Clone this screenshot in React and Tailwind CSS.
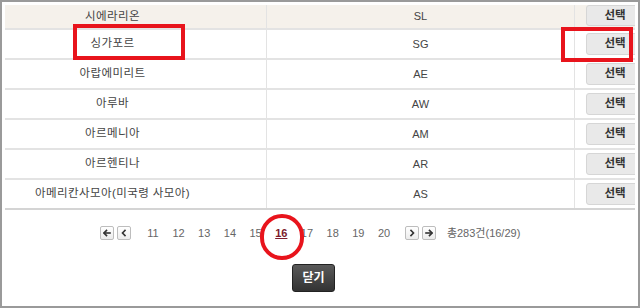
import { useState } from "react";

const rows = [
  { name: "시에라리온", code: "SL" },
  { name: "싱가포르", code: "SG" },
  { name: "아랍에미리트", code: "AE" },
  { name: "아루바", code: "AW" },
  { name: "아르메니아", code: "AM" },
  { name: "아르헨티나", code: "AR" },
  { name: "아메리칸사모아(미국령 사모아)", code: "AS" },
];

const pages = [11, 12, 13, 14, 15, 16, 17, 18, 19, 20];

const font = { fontFamily: '"Liberation Sans", "Noto Sans CJK KR", sans-serif' };

function PageBox({ children }) {
  return (
    <span className="flex h-[14px] w-[14px] items-center justify-center rounded-[2px] border border-[#bdbdbd] bg-gradient-to-b from-white to-[#ececec] text-[#333]">
      {children}
    </span>
  );
}

// 작은 화살표 아이콘
function Arrow({ dir, bar }) {
  const flip = dir === "right" ? "scale(-1,1) translate(-8,0)" : undefined;
  return (
    <svg width="8" height="8" viewBox="0 0 8 8">
      <g transform={flip} fill="none" stroke="#333" strokeWidth="1.6" strokeLinecap="square">
        {bar ? (
          <>
            <path d="M3.5 1.5 L1 4 L3.5 6.5" />
            <path d="M1.5 4 H7" />
          </>
        ) : (
          <path d="M5 1.5 L2.5 4 L5 6.5" />
        )}
      </g>
    </svg>
  );
}

export default function App() {
  const [current] = useState(16);

  return (
    <div
      className="relative h-[308px] w-[640px] overflow-hidden border-2 border-[#9a9a9a] bg-white text-[#444]"
      style={font}
    >
      {/* 국가 목록 */}
      <div className="ml-[3px] mt-[3px] w-[630px] overflow-hidden">
        {rows.map((r, i) => (
          <div
            key={r.code}
            className={
              "flex border-b-2 " +
              (i === 0 ? "h-[25px] bg-[#f5f1eb] " : "h-[30px] ") +
              (i === rows.length - 1 ? "border-[#d4d4d4]" : "border-[#e3e3e3]")
            }
          >
            <div
              className={
                "flex w-[262px] justify-center border-r border-[#e3e3e3] pr-[46px] text-[11.5px] tracking-[0.4px] " +
                (i === 0 ? "items-end pb-[3px]" : "items-center")
              }
            >
              {r.name}
            </div>
            <div
              className={
                "flex w-[308px] justify-center border-r border-[#e3e3e3] text-[11px] " +
                (i === 0 ? "items-end pb-[4px]" : "items-center")
              }
            >
              {r.code}
            </div>
            <div className={"flex w-[60px] overflow-hidden pl-[11px] " + (i === 0 ? "items-start" : "items-center")}>
              <button
                type="button"
                className={
                  "flex w-[58px] shrink-0 items-center justify-center rounded-[3px] border border-[#d6d6d6] bg-[#e9e9e9] text-[11.5px] font-bold text-[#333] " +
                  (i === 0 ? "h-[21px]" : "h-[22px]")
                }
              >
                선택
              </button>
            </div>
          </div>
        ))}
      </div>

      {/* 페이지 */}
      <div className="ml-[98px] mt-[16px] flex h-[14px] items-center text-[11px] text-[#666]">
        <PageBox>
          <Arrow dir="left" bar />
        </PageBox>
        <span className="ml-[3px]">
          <PageBox>
            <Arrow dir="left" />
          </PageBox>
        </span>
        <div className="ml-[9px] flex">
          {pages.map((p) =>
            p === current ? (
              <span key={p} className="w-[25.7px] text-center font-bold text-[#7d1b2c] underline">
                {p}
              </span>
            ) : (
              <span key={p} className="w-[25.7px] text-center">
                {p}
              </span>
            )
          )}
        </div>
        <span className="ml-[8px]">
          <PageBox>
            <Arrow dir="right" />
          </PageBox>
        </span>
        <span className="ml-[3px]">
          <PageBox>
            <Arrow dir="right" bar />
          </PageBox>
        </span>
        <span className="ml-[11px] text-[#666]">총283건(16/29)</span>
      </div>

      <div className="ml-[290px] mt-[24px]">
        <button
          type="button"
          className="h-[28px] w-[43px] rounded-[3px] border border-[#222] bg-gradient-to-b from-[#5a5a5a] to-[#333] text-[12px] font-bold text-white"
        >
          닫기
        </button>
      </div>

      {/* 표시 */}
      <div className="pointer-events-none absolute left-[71px] top-[22px] h-[36px] w-[112px] border-[4px] border-[#e8141c]" />
      <div className="pointer-events-none absolute left-[559px] top-[25px] h-[35px] w-[72px] border-[4px] border-[#e8141c]" />
      <div className="pointer-events-none absolute left-[258px] top-[212px] h-[46px] w-[44px] rounded-full border-[4px] border-[#e8141c]" />
    </div>
  );
}
